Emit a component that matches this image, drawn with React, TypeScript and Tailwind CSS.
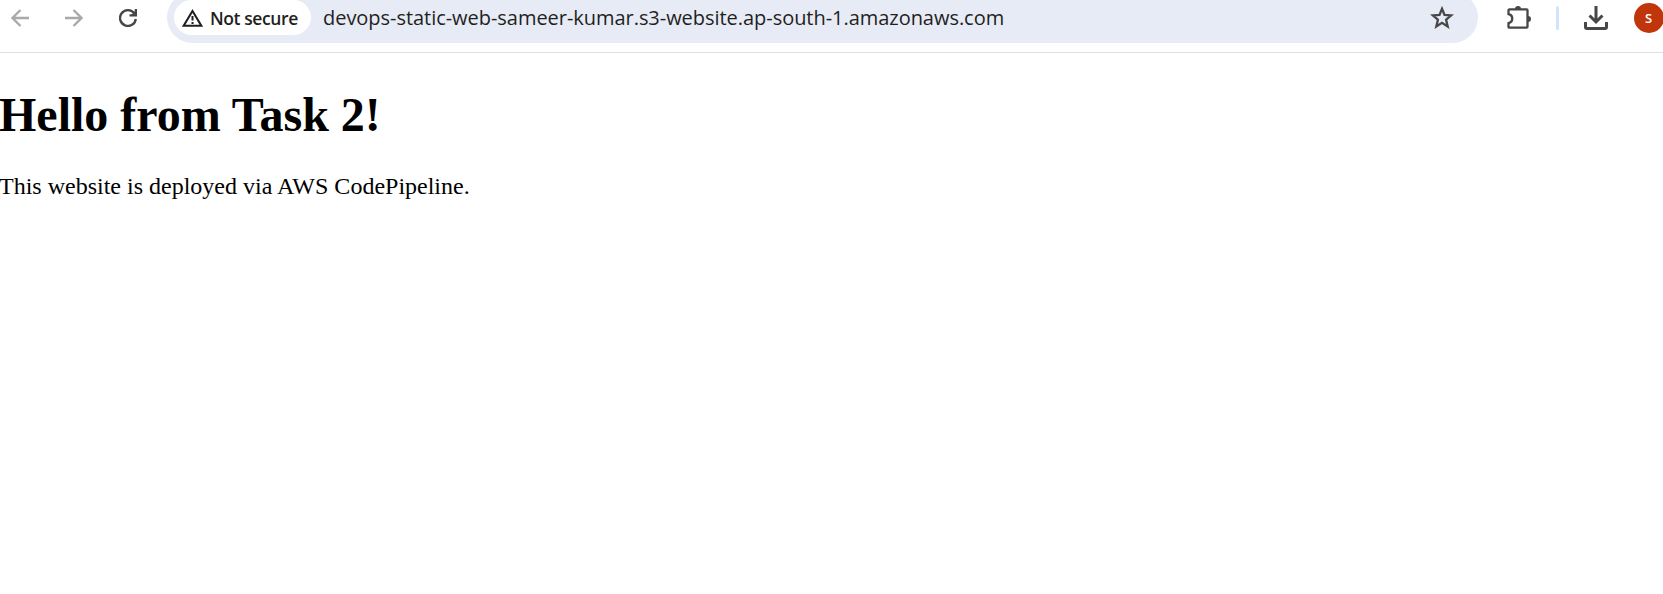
import type { ReactNode } from "react";

function Icon({ w, h, className, children }: { w: number; h: number; className: string; children: ReactNode }) {
  return (
    <svg
      width={w}
      height={h}
      viewBox={`0 0 ${w} ${h}`}
      fill="none"
      stroke="currentColor"
      strokeWidth={2.3}
      className={`block shrink-0 ${className}`}
    >
      {children}
    </svg>
  );
}

function Toolbar() {
  return (
    <header className="flex h-[53px] items-start overflow-hidden border-b border-[#dfdfdf] bg-white text-[#474747]">
      <nav className="flex h-9 w-[167px] shrink-0 items-center pl-[11px]">
        <Icon w={18} h={18} className="text-[#a9a9a9]">
          <path d="M18 9H1.500M9.500 1L1.500 9L9.500 17" />
        </Icon>
        <Icon w={18} h={18} className="ml-9 text-[#a9a9a9]">
          <path d="M0 9H16.500M8.500 1L16.500 9L8.500 17" />
        </Icon>
        <Icon w={18} h={18} className="ml-9">
          <path d="M16.800 10A7.900 7.900 0 1 1 15.200 4.200" />
          <path d="M16.900 0V6.400H10.500" />
          <path d="M12 6.500L17 1V6.500Z" fill="currentColor" stroke="none" />
        </Icon>
      </nav>

      <div className="-mt-2 flex h-[51px] w-[1311px] shrink-0 items-center rounded-full bg-[#e7ebf5] pl-[7px]">
        <div className="flex h-[35px] w-[137px] shrink-0 items-center rounded-full bg-white pl-[8px] text-[#1f1f1f]">
          <Icon w={21} h={18} className="">
            <path d="M10.500 2L19.300 16.700H1.700Z" strokeWidth={2} />
            <path d="M10.500 7V11.500M10.500 13V15" strokeWidth={2} />
          </Icon>
          <span className="ml-[7px] whitespace-nowrap font-['Open_Sans',sans-serif] text-[17.5px] leading-6 font-semibold tracking-[-0.4px]">
            Not secure
          </span>
        </div>
        <span className="ml-[12px] whitespace-nowrap font-['Open_Sans',sans-serif] text-[20px] leading-6 tracking-[-0.04px] text-[#1f1f1f]">
          devops-static-web-sameer-kumar.s3-website.ap-south-1.amazonaws.com
        </span>
        <Icon w={24} h={24} className="mr-6 ml-auto">
          <path d="M12 2.800L14.500 8.900L21.200 9.400L16.100 13.700L17.700 20.400L12 16.800L6.300 20.400L7.900 13.700L2.800 9.400L9.500 8.900Z" />
        </Icon>
      </div>

      <div className="flex h-9 shrink-0 items-center pl-[29px]">
        <Icon w={25} h={26} className="">
          <path d="M2.500 4.300H19.500Q20.500 4.300 20.500 5.300V21.700Q20.500 22.700 19.500 22.700H2.500Q1.500 22.700 1.500 21.700V18.200A4.700 4.700 0 0 0 1.500 9V5.300Q1.500 4.300 2.500 4.300Z" />
          <path d="M8 4A3 3 0 0 1 14 4ZM21 11A3 3 0 0 1 21 17Z" fill="currentColor" stroke="none" />
        </Icon>
        <div className="ml-[24px] h-6 w-[3px] rounded-full bg-[#d3e3fd]" />
        <Icon w={24} h={24} className="ml-[25px]">
          <path d="M12 0V16M5.500 9.500L12 16L18.500 9.500M1.500 16V21Q1.500 22.500 3 22.500H21Q22.500 22.500 22.500 21V16" strokeWidth={3} />
        </Icon>
        <div className="ml-[26px] flex size-[30px] shrink-0 items-center justify-center rounded-full bg-[#c1350b] pr-px font-['Open_Sans',sans-serif] text-[13px] leading-none font-semibold text-white">
          S
        </div>
      </div>
    </header>
  );
}

export default function App() {
  return (
    <div className="h-[594px] overflow-hidden bg-white">
      <Toolbar />
      <main className="-ml-px pt-[34px] font-['Liberation_Serif',serif] text-black">
        <h1 className="text-[48px] leading-[55px] font-bold">Hello from Task 2!</h1>
        <p className="mt-[31px] text-[24px] leading-[27px]">This website is deployed via AWS CodePipeline.</p>
      </main>
    </div>
  );
}
